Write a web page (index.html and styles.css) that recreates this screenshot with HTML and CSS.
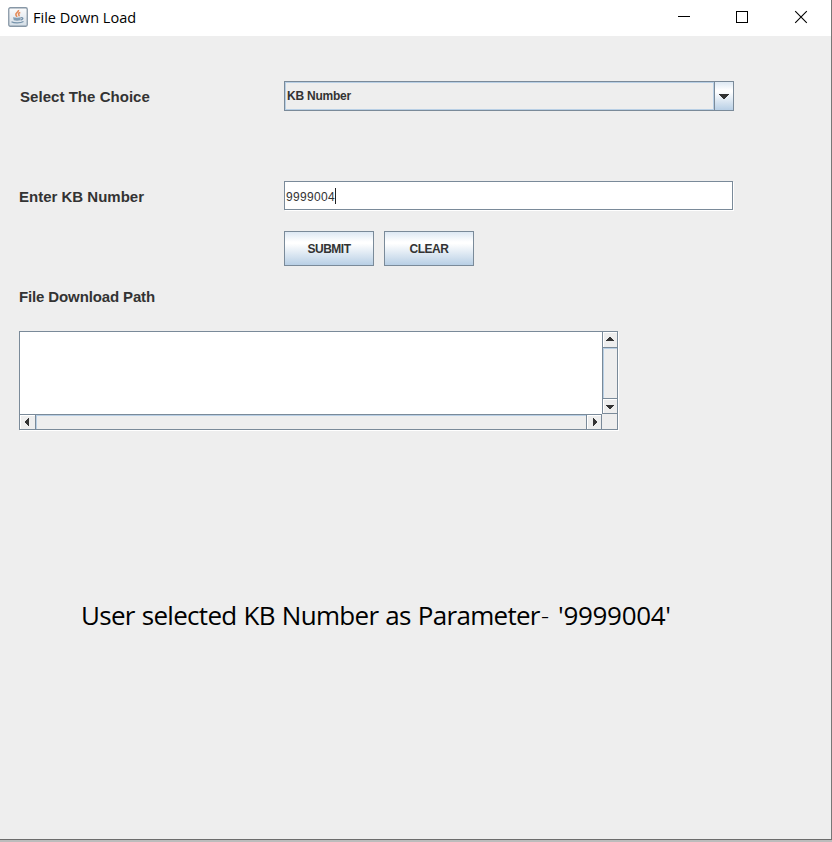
FILE: index.html
```html
<!DOCTYPE html>
<html lang="en">
<head>
<meta charset="utf-8">
<title>File Down Load</title>
<link rel="stylesheet" href="styles.css">
</head>
<body>
<div class="window">
  <header class="titlebar">
    <svg class="app-icon" width="20" height="20" viewBox="0 0 20 20">
      <defs><linearGradient id="tile" x1="0" y1="0" x2="0" y2="1"><stop offset="0" stop-color="#fdfdfd"/><stop offset="1" stop-color="#d3dde6"/></linearGradient></defs>
      <rect x=".75" y=".75" width="18.5" height="18.5" rx="1.5" fill="url(#tile)" stroke="#8797a6" stroke-width="1.3"/>
      <path d="M10.500 3c.5 1.800-3 2.700-2.600 4.600.1.900.9 1.500 1 2.300M12.300 5.500c-1.800.5-2.300 1.300-1.400 2.300.4.500.1 1.100-.3 1.500" fill="none" stroke="#e58b58" stroke-width="1.600"/>
      <path d="M5 10.300c2 .6 6 .6 8 0l-.8 3c-1.500.6-4.900.6-6.400 0z" fill="#829db3"/>
      <path d="M13 10.800c2.300-.6 2.800 1.500-.4 2.200M3.500 14.700c2.500 1.500 9 1.500 12-.2" fill="none" stroke="#7592aa" stroke-width="1.300"/>
    </svg>
    <h1 class="title">File Down Load</h1>
    <svg class="controls" width="130" height="14" viewBox="0 0 130 14" fill="none" stroke="#000">
      <path d="M0 6.500H12"/>
      <rect x="58.500" y="1.500" width="11" height="11"/>
      <path d="M117.200 1.200l11.600 11.600M128.800 1.200L117.200 12.800" stroke-width="1.100"/>
    </svg>
  </header>
  <main class="content">
    <div class="row row-choice">
      <label class="label label-choice">Select The Choice</label>
      <div class="combo">
        <div class="combo-value"><span>KB Number</span></div>
        <div class="combo-button"><svg width="10" height="5" shape-rendering="crispEdges"><path d="M0 0h10v1h-1v1h-1v1h-1v1h-1v1h-2v-1h-1v-1h-1v-1h-1v-1h-1z" fill="#333"/></svg></div>
      </div>
    </div>
    <div class="row row-number">
      <label class="label label-number">Enter KB Number</label>
      <div class="field"><span class="field-text">9999004</span><i class="caret"></i></div>
    </div>
    <div class="buttons">
      <button class="button submit"><span>SUBMIT</span></button>
      <button class="button clear"><span>CLEAR</span></button>
    </div>
    <div class="label label-path">File Download Path</div>
    <div class="scrollpane">
      <div class="viewport"></div>
      <div class="vbar">
        <div class="arrow up"><svg width="8" height="4" shape-rendering="crispEdges"><path d="M3 0h2v1h1v1h1v1h1v1H0V3h1V2h1V1h1z" fill="#333"/></svg></div>
        <div class="vtrack"></div>
        <div class="arrow down"><svg width="8" height="4" shape-rendering="crispEdges"><path d="M0 0h8v1H7v1H6v1H5v1H3V3H2V2H1V1H0z" fill="#333"/></svg></div>
      </div>
      <div class="hbar">
        <div class="arrow left"><svg width="4" height="8" shape-rendering="crispEdges"><path d="M4 0v8H3V7H2V6H1V5H0V3h1V2h1V1h1V0z" fill="#333"/></svg></div>
        <div class="htrack"></div>
        <div class="arrow right"><svg width="4" height="8" shape-rendering="crispEdges"><path d="M0 0v8h1V7h1V6h1V5h1V3H3V2H2V1H1V0z" fill="#333"/></svg></div>
      </div>
      <div class="corner"></div>
    </div>
    <p class="message"><span class="message-text">User selected KB Number as Parameter</span><span class="dash">-</span><span class="message-number">'9999004'</span></p>
  </main>
</div>
</body>
</html>
```
FILE: styles.css
```css
* { box-sizing: border-box; }
body { margin: 0; background: #bcbcbc; font-family: "Liberation Sans", Arial, sans-serif; color: #333; }
svg { display: block; flex: none; }
.window { width: 832px; height: 840px; background: #eee; border-right: 1px solid #777; border-bottom: 1px solid #6c6c6c; overflow: hidden; }
.titlebar { height: 36px; background: #fff; display: flex; align-items: flex-start; padding: 7px 23px 0 8px; }
.title { margin: 0 auto 0 5px; font: 400 14.5px/22px "Open Sans", sans-serif; color: #000; white-space: nowrap; }
.controls { margin-top: 3px; }
.content { padding: 45px 0 0 19px; }
.row { display: flex; height: 30px; }
.label { font-size: 15px; line-height: 32px; font-weight: 700; white-space: nowrap; }
.row .label { width: 265px; }
.label-choice { padding-left: 1px; letter-spacing: .04px; }
.row-number { margin-top: 70px; }
.combo { width: 450px; height: 30px; display: flex; border: 1px solid #7a8a99; }
.combo-value { flex: 1; border: 1px solid #b8cfe5; font-size: 12px; font-weight: 700; line-height: 26px; padding-left: 1px; letter-spacing: -.22px; white-space: nowrap; }
.combo-button { width: 19px; border-left: 1px solid #7a8a99; background: linear-gradient(#dde8f3, #fff 30%, #fff 35%, #b8cfe5); display: flex; align-items: center; justify-content: center; padding-top: 1px; }
.field { width: 449px; height: 29px; background: #fff; border: 1px solid #7a8a99; box-shadow: 1px 1px #fff; display: flex; align-items: center; padding: 1px 0 0 1px; font-size: 12px; white-space: nowrap; }
.field-text { letter-spacing: .32px; line-height: 14px; padding-top: 1px; }
.caret { width: 1px; height: 16px; background: #222; }
.buttons { display: flex; gap: 10px; margin: 20px 0 0 265px; }
.button { width: 90px; height: 35px; padding: 1px 0 0; border: 1px solid #7a8a99; border-radius: 0; background: linear-gradient(#dde8f3, #fff 30%, #fff 35%, #b8cfe5); font: 700 12px/32px "Liberation Sans", Arial, sans-serif; letter-spacing: -.5px; color: #333; }
.label-path { margin-top: 15px; line-height: 31px; letter-spacing: -.13px; }
.scrollpane { width: 599px; height: 99px; margin-top: 19px; border: 1px solid #7a8a99; box-shadow: 1px 1px #fff; display: grid; grid-template: 82px 15px / 582px 15px; }
.viewport { background: #fff; }
.vbar { border-left: 1px solid #7a8a99; display: flex; flex-direction: column; }
.hbar { border-top: 1px solid #7a8a99; display: flex; }
.corner { border-top: 1px solid #7a8a99; margin-top: -1px; }
.arrow { display: flex; align-items: center; justify-content: center; border: 0 solid #7a8a99; box-shadow: inset 1px 1px #fff; }
.up { height: 16px; padding-bottom: 1px; border-bottom-width: 1px; }
.down { height: 16px; padding-top: 1px; border-top-width: 1px; }
.vtrack { flex: 1; box-shadow: inset 1px 1px #b8cfe5; }
.left { width: 16px; padding-right: 1px; border-right-width: 1px; }
.right { width: 16px; padding-left: 2px; border-left-width: 1px; border-right-width: 1px; }
.htrack { flex: 1; box-shadow: inset 1px 1px #b8cfe5; }
.message { margin: 165px 0 0 62px; display: flex; font: 400 26px/40px "Open Sans", sans-serif; color: #000; white-space: nowrap; }
.message-text { width: 459px; letter-spacing: -.71px; word-spacing: 1px; }
.dash { width: 18px; padding-left: 1px; font-size: 25px; font-weight: 300; }
.message-number { letter-spacing: -.3px; }
```
